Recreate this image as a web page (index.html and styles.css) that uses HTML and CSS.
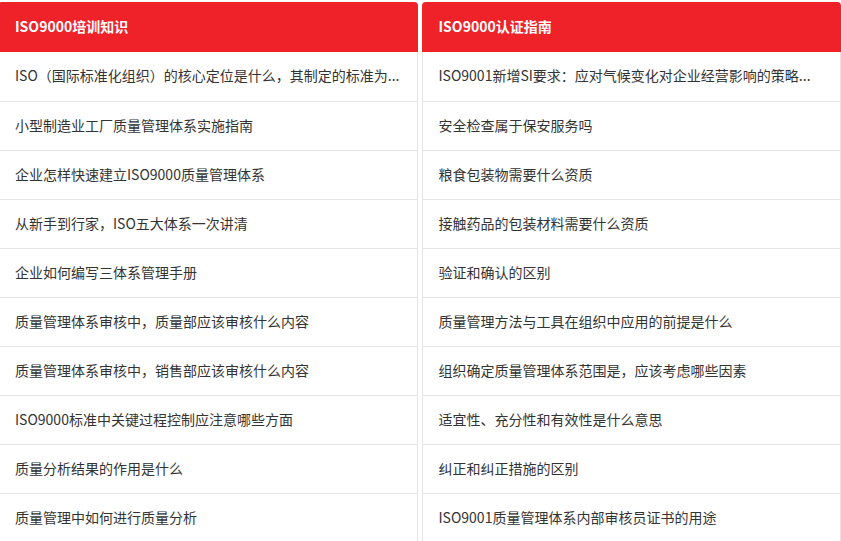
FILE: index.html
```html
<!DOCTYPE html>
<html lang="zh-CN">
<head>
<meta charset="utf-8">
<link rel="stylesheet" href="styles.css">
</head>
<body>
<div class="wrap">
  <section class="card">
    <h2 class="card-head">ISO9000培训知识</h2>
    <ul class="list">
      <li class="item">ISO（国际标准化组织）的核心定位是什么，其制定的标准为...</li>
      <li class="item">小型制造业工厂质量管理体系实施指南</li>
      <li class="item">企业怎样快速建立ISO9000质量管理体系</li>
      <li class="item">从新手到行家，ISO五大体系一次讲清</li>
      <li class="item">企业如何编写三体系管理手册</li>
      <li class="item">质量管理体系审核中，质量部应该审核什么内容</li>
      <li class="item">质量管理体系审核中，销售部应该审核什么内容</li>
      <li class="item">ISO9000标准中关键过程控制应注意哪些方面</li>
      <li class="item">质量分析结果的作用是什么</li>
      <li class="item">质量管理中如何进行质量分析</li>
    </ul>
  </section>
  <section class="card">
    <h2 class="card-head">ISO9000认证指南</h2>
    <ul class="list">
      <li class="item">ISO9001新增SI要求：应对气候变化对企业经营影响的策略...</li>
      <li class="item">安全检查属于保安服务吗</li>
      <li class="item">粮食包装物需要什么资质</li>
      <li class="item">接触药品的包装材料需要什么资质</li>
      <li class="item">验证和确认的区别</li>
      <li class="item">质量管理方法与工具在组织中应用的前提是什么</li>
      <li class="item">组织确定质量管理体系范围是，应该考虑哪些因素</li>
      <li class="item">适宜性、充分性和有效性是什么意思</li>
      <li class="item">纠正和纠正措施的区别</li>
      <li class="item">ISO9001质量管理体系内部审核员证书的用途</li>
    </ul>
  </section>
</div>
</body>
</html>
```

FILE: styles.css
```css
* { box-sizing: border-box; }
html, body { margin: 0; padding: 0; background: #fff; }
body {
  font-family: "Noto Sans CJK SC", "Liberation Sans", sans-serif;
  color: #333;
  overflow: hidden;
}
.wrap {
  display: flex;
  gap: 4px;
  margin-left: -2px;
  width: 843px;
  padding-top: 2px;
}
.card {
  flex: 1 1 0;
  min-width: 0;
  background: #fff;
}
.card-head {
  margin: 0;
  height: 50px;
  line-height: 48px;
  padding: 0 17px;
  background: #ef2129;
  color: #fff;
  font-size: 14px;
  font-weight: 700;
  border-radius: 4px 4px 0 0;
}
.list {
  list-style: none;
  margin: 0;
  padding: 0;
  border-left: 1px solid #e4e4e4;
  border-right: 1px solid #e4e4e4;
}
.item {
  height: 49px;
  line-height: 46px;
  padding: 0 16px;
  border-bottom: 1px solid #e4e4e4;
  font-size: 14px;
  white-space: nowrap;
  overflow: hidden;
}
.item:first-child {
  height: 50px;
  line-height: 47px;
}
```
